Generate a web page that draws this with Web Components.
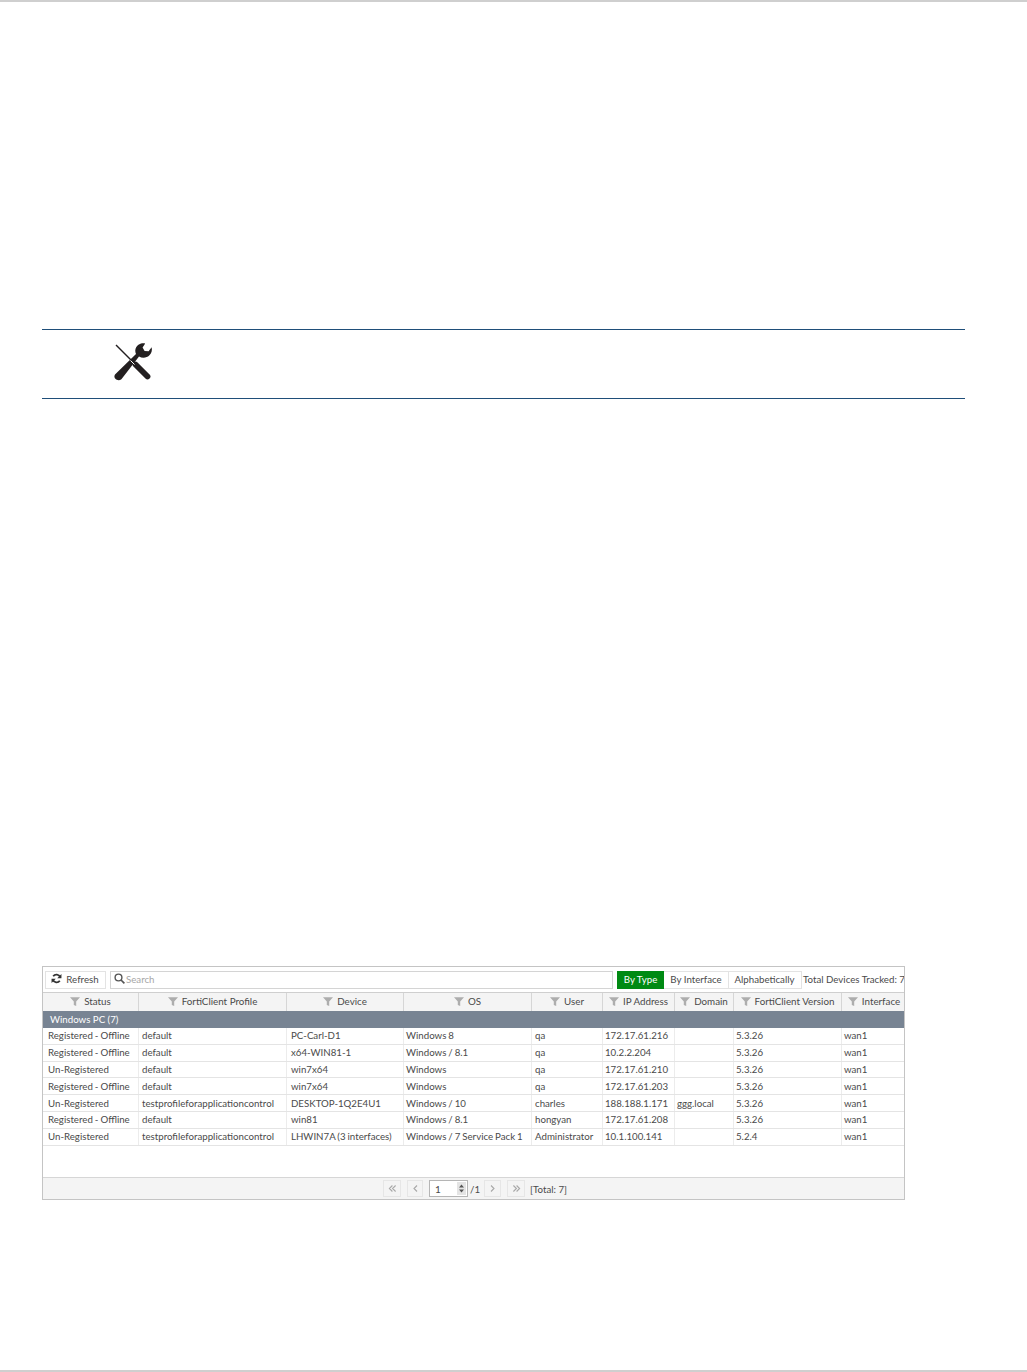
<!DOCTYPE html>
<html>
<head>
<meta charset="utf-8">
<style>
  html, body { margin: 0; padding: 0; background: #fff; }
</style>
</head>
<body>
<doc-page>
  <note-box></note-box>
  <device-monitor></device-monitor>
</doc-page>

<script>
const COLS = '96px 148px 117px 128px 71px 72px 59px 108px 64px';
// left padding of each data column, they are not quite even in the screenshot
const PADS = [5, 3, 4, 2, 3, 2, 2, 2, 2];

class DocPage extends HTMLElement {
    constructor() {
        super();
        this.attachShadow({ mode: 'open' });
        this.shadowRoot.innerHTML = `
            <style>
                :host {
                    display: flex;
                    flex-direction: column;
                    box-sizing: border-box;
                    height: 1372px;
                    border-top: 2px solid #cfcfcf;
                    border-bottom: 2px solid #cfcfcf;
                    padding: 327px 0 0 42px;
                    font-family: Lato, "Liberation Sans", sans-serif;
                }
            </style>
            <slot></slot>
        `;
    }
}

class NoteBox extends HTMLElement {
    constructor() {
        super();
        this.attachShadow({ mode: 'open' });
        this.shadowRoot.innerHTML = `
            <style>
                :host {
                    display: flex;
                    box-sizing: border-box;
                    width: 923px;
                    height: 70px;
                    border-top: 1px solid #1f4e79;
                    border-bottom: 1px solid #1f4e79;
                    padding: 12px 0 0 71px;
                }
                svg { display: block; }
            </style>
            <svg width="40" height="40" viewBox="0 0 40 40">
                <path d="M3 3 L20 20" stroke="#231f20" stroke-width="1.4" fill="none"/>
                <path d="M22.5 22.5 L34.5 34.5" stroke="#231f20" stroke-width="5.8" stroke-linecap="round" fill="none"/>
                <path d="M2 32.5 L23 12 C21 7.5 23.5 3 28 1.6 C29.5 1.2 31 1.2 32.2 1.6 L29.6 5.6 L31.6 9 L35.6 9.2 L38.6 5.2 C39.4 8 38.6 11.4 36.2 13.6 C33.8 15.8 29.5 16.5 26 14.5 L8.4 37.2 C6.6 38.6 4 38.4 2.6 37 C1.2 35.6 1 34 2 32.5 Z" fill="#231f20"/>
                <path d="M17.5 18.5 L21.5 22.5" stroke="#fff" stroke-width="1" fill="none"/>
            </svg>
        `;
    }
}

class MonButton extends HTMLElement {
    constructor() {
        super();
        this.attachShadow({ mode: 'open' });
        this.shadowRoot.innerHTML = `
            <style>
                :host {
                    display: flex;
                    flex: none;
                    align-items: center;
                    justify-content: center;
                    box-sizing: border-box;
                    height: 18px;
                    padding-bottom: 2px;
                    border: 1px solid #e3e3e3;
                    background: #fff;
                    color: #4a4a4a;
                    font-size: 9.7px;
                    white-space: nowrap;
                }
                :host([active]) {
                    background: #008a13;
                    border-color: #008a13;
                    color: #fff;
                }
            </style>
            <slot></slot>
        `;
    }
}

class MonToolbar extends HTMLElement {
    constructor() {
        super();
        this.attachShadow({ mode: 'open' });
        this.shadowRoot.innerHTML = `
            <style>
                :host {
                    display: flex;
                    flex: none;
                    align-items: center;
                    box-sizing: border-box;
                    height: 25px;
                    padding: 0 0 0 2px;
                    overflow: hidden;
                }
                mon-button.refresh { width: 61px; padding-right: 1px; }
                mon-button.refresh svg { margin-right: 4px; }
                .search {
                    display: flex;
                    flex: none;
                    align-items: center;
                    box-sizing: border-box;
                    width: 503px;
                    height: 18px;
                    margin-left: 4px;
                    padding: 0 0 2px 3px;
                    gap: 1px;
                    border: 1px solid #d4d4d4;
                    color: #a6a6a6;
                    font-size: 9.7px;
                }
                .seg { display: flex; flex: none; margin-left: 4px; }
                .seg mon-button:nth-child(1) { width: 47px; }
                .seg mon-button:nth-child(2) { width: 64px; border-left: 0; border-right: 0; }
                .seg mon-button:nth-child(3) { width: 74px; padding-right: 1px; }
                .total {
                    flex: none;
                    margin-left: 1px;
                    padding-bottom: 2px;
                    color: #4a4a4a;
                    font-size: 9.7px;
                    white-space: nowrap;
                }
            </style>
            <mon-button class="refresh">
                <svg width="11" height="11" viewBox="0 0 12 12">
                    <path d="M10 4.4 A4.4 4.4 0 0 0 2.4 3.6" stroke="#333" stroke-width="2" fill="none"/>
                    <path d="M2 7.6 A4.4 4.4 0 0 0 9.6 8.4" stroke="#333" stroke-width="2" fill="none"/>
                    <path d="M11.4 1 V5.6 H6.8 Z M0.6 11 V6.4 H5.2 Z" fill="#333"/>
                </svg>Refresh
            </mon-button>
            <div class="search">
                <svg width="11" height="11" viewBox="0 0 11 11">
                    <circle cx="4.5" cy="4.5" r="3.4" stroke="#555" stroke-width="1.4" fill="none"/>
                    <path d="M7 7 L10.4 10.4" stroke="#555" stroke-width="1.7"/>
                </svg>
                <span>Search</span>
            </div>
            <div class="seg">
                <mon-button active>By Type</mon-button>
                <mon-button>By Interface</mon-button>
                <mon-button>Alphabetically</mon-button>
            </div>
            <span class="total">Total Devices Tracked: 7</span>
        `;
    }
}

class MonHead extends HTMLElement {
    constructor() {
        super();
        this.attachShadow({ mode: 'open' });
        const names = ['Status', 'FortiClient Profile', 'Device', 'OS', 'User', 'IP Address', 'Domain', 'FortiClient Version', 'Interface'];
        const cells = names.map(n => `
            <div class="cell">
                <svg width="10" height="9" viewBox="0 0 10 9"><path d="M0 0.3 H10 L6.2 4.6 V9 L3.8 8 V4.6 Z" fill="#adadad"/></svg>
                <span>${n}</span>
            </div>`).join('');
        this.shadowRoot.innerHTML = `
            <style>
                :host {
                    display: grid;
                    grid-template-columns: ${COLS};
                    height: 19px;
                    box-sizing: border-box;
                    border-top: 1px solid #cfcfcf;
                    background: #f4f4f4;
                }
                .cell {
                    display: flex;
                    align-items: center;
                    justify-content: center;
                    gap: 4px;
                    padding-bottom: 2px;
                    color: #4a4a4a;
                    font-size: 9.8px;
                    white-space: nowrap;
                    border-right: 1px solid #d6d6d6;
                    box-sizing: border-box;
                }
                .cell:last-child { border-right: 0; }
            </style>
            ${cells}
        `;
    }
}

class MonRow extends HTMLElement {
    constructor() {
        super();
        this.attachShadow({ mode: 'open' });
    }

    connectedCallback() {
        const values = (this.getAttribute('cells') || '').split('|');
        this.shadowRoot.innerHTML = `
            <style>
                :host {
                    display: grid;
                    grid-template-columns: ${COLS};
                    height: 16.8px;
                    box-sizing: border-box;
                    border-bottom: 1px solid #e4e4e4;
                }
                div {
                    display: flex;
                    align-items: center;
                    box-sizing: border-box;
                    padding-bottom: 1px;
                    color: #4a4a4a;
                    font-size: 9.7px;
                    word-spacing: -0.5px;
                    white-space: nowrap;
                    border-right: 1px solid #ececec;
                }
                div:last-child { border-right: 0; }
            </style>
            ${values.map((v, i) => `<div style="padding-left:${PADS[i]}px">${v}</div>`).join('')}
        `;
    }
}

class MonPager extends HTMLElement {
    constructor() {
        super();
        this.attachShadow({ mode: 'open' });
        const chev = d => `<svg width="9" height="9" viewBox="0 0 9 9"><path d="${d}" stroke="#a8a8a8" stroke-width="1.1" fill="none"/></svg>`;
        this.shadowRoot.innerHTML = `
            <style>
                :host {
                    display: flex;
                    align-items: center;
                    gap: 6px;
                    height: 22px;
                    box-sizing: border-box;
                    border-top: 1px solid #d6d6d6;
                    background: #f4f4f4;
                    color: #4a4a4a;
                    font-size: 9.7px;
                    padding-left: 340px;
                }
                .btn {
                    display: flex;
                    align-items: center;
                    justify-content: center;
                    box-sizing: border-box;
                    width: 18px;
                    height: 17px;
                    border: 1px solid #e6e6e6;
                }
                .btn.prev { width: 16px; }
                .btn.next { width: 17px; }
                .num {
                    display: flex;
                    align-items: center;
                    justify-content: space-between;
                    box-sizing: border-box;
                    width: 39px;
                    height: 17px;
                    padding: 0 1px 0 5px;
                    background: #fff;
                    border: 1px solid #b5b5b5;
                    font-size: 10px;
                    margin-right: -4px;
                }
                .spin {
                    display: flex;
                    align-items: center;
                    justify-content: center;
                    width: 9px;
                    height: 13px;
                    background: #e4e4e4;
                }
                .of { margin-right: -2px; }
                .total { margin-left: -1px; }
            </style>
            <span class="btn">${chev('M4.4 1.5 L1.4 4.5 L4.4 7.5 M7.6 1.5 L4.6 4.5 L7.6 7.5')}</span>
            <span class="btn prev">${chev('M6 1.5 L3 4.5 L6 7.5')}</span>
            <span class="num">1<span class="spin">
                <svg width="5" height="9" viewBox="0 0 5 9"><path d="M2.5 0.5 L5 3.5 H0 Z M2.5 8.5 L0 5.5 H5 Z" fill="#555"/></svg>
            </span></span>
            <span class="of">/1</span>
            <span class="btn next">${chev('M3 1.5 L6 4.5 L3 7.5')}</span>
            <span class="btn">${chev('M1.4 1.5 L4.4 4.5 L1.4 7.5 M4.6 1.5 L7.6 4.5 L4.6 7.5')}</span>
            <span class="total">[Total: 7]</span>
        `;
    }
}

class DeviceMonitor extends HTMLElement {
    constructor() {
        super();
        this.attachShadow({ mode: 'open' });
        const rows = [
            'Registered - Offline|default|PC-Carl-D1|Windows 8|qa|172.17.61.216||5.3.26|wan1',
            'Registered - Offline|default|x64-WIN81-1|Windows / 8.1|qa|10.2.2.204||5.3.26|wan1',
            'Un-Registered|default|win7x64|Windows|qa|172.17.61.210||5.3.26|wan1',
            'Registered - Offline|default|win7x64|Windows|qa|172.17.61.203||5.3.26|wan1',
            'Un-Registered|testprofileforapplicationcontrol|DESKTOP-1Q2E4U1|Windows / 10|charles|188.188.1.171|ggg.local|5.3.26|wan1',
            'Registered - Offline|default|win81|Windows / 8.1|hongyan|172.17.61.208||5.3.26|wan1',
            'Un-Registered|testprofileforapplicationcontrol|LHWIN7A (3 interfaces)|Windows / 7 Service Pack 1|Administrator|10.1.100.141||5.2.4|wan1'
        ];
        this.shadowRoot.innerHTML = `
            <style>
                :host {
                    display: flex;
                    flex-direction: column;
                    box-sizing: border-box;
                    width: 863px;
                    height: 234px;
                    margin-top: 567px;
                    border: 1px solid #c4c4c4;
                    overflow: hidden;
                }
                .group {
                    height: 17px;
                    flex: none;
                    box-sizing: border-box;
                    display: flex;
                    align-items: center;
                    padding: 0 0 2px 7px;
                    background: #788493;
                    color: #fff;
                    font-size: 9.7px;
                }
                .rows { flex: 1; }
            </style>
            <mon-toolbar></mon-toolbar>
            <mon-head></mon-head>
            <div class="group">Windows PC (7)</div>
            <div class="rows">
                ${rows.map(r => `<mon-row cells="${r}"></mon-row>`).join('')}
            </div>
            <mon-pager></mon-pager>
        `;
    }
}

customElements.define('doc-page', DocPage);
customElements.define('note-box', NoteBox);
customElements.define('mon-button', MonButton);
customElements.define('mon-toolbar', MonToolbar);
customElements.define('mon-head', MonHead);
customElements.define('mon-row', MonRow);
customElements.define('mon-pager', MonPager);
customElements.define('device-monitor', DeviceMonitor);
</script>
</body>
</html>
